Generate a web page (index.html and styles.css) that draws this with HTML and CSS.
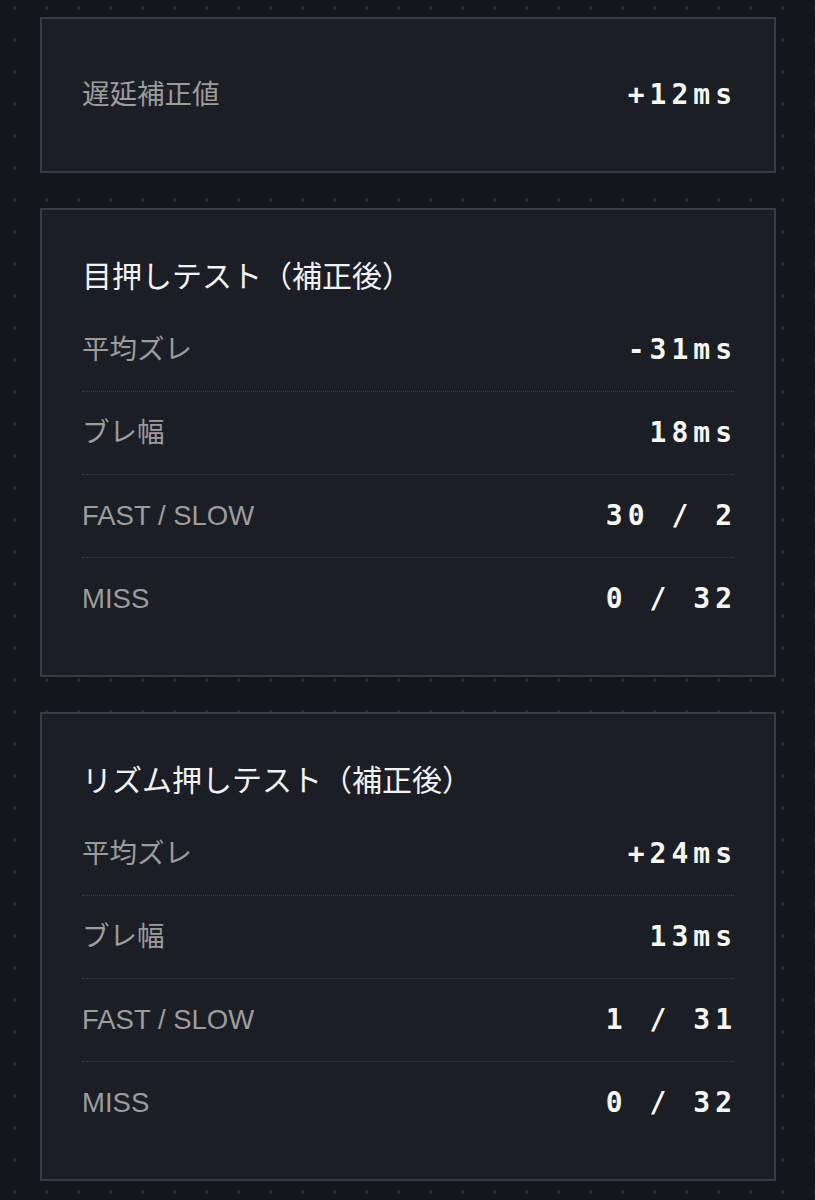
FILE: index.html
```html
<!DOCTYPE html>
<html lang="ja">
<head>
    <meta charset="UTF-8">
    <meta name="viewport" content="width=device-width, initial-scale=1.0">
    <title>遅延補正 結果</title>
    <link rel="stylesheet" href="styles.css">
</head>
<body>
    <div class="container">
        <section class="card">
            <div class="row">
                <span class="label">遅延補正値</span>
                <span class="value">+12ms</span>
            </div>
        </section>

        <section class="card">
            <h2 class="card-title">目押しテスト（補正後）</h2>
            <div class="row">
                <span class="label">平均ズレ</span>
                <span class="value">-31ms</span>
            </div>
            <div class="row">
                <span class="label">ブレ幅</span>
                <span class="value">18ms</span>
            </div>
            <div class="row">
                <span class="label">FAST / SLOW</span>
                <span class="value">30 / 2</span>
            </div>
            <div class="row">
                <span class="label">MISS</span>
                <span class="value">0 / 32</span>
            </div>
        </section>

        <section class="card">
            <h2 class="card-title">リズム押しテスト（補正後）</h2>
            <div class="row">
                <span class="label">平均ズレ</span>
                <span class="value">+24ms</span>
            </div>
            <div class="row">
                <span class="label">ブレ幅</span>
                <span class="value">13ms</span>
            </div>
            <div class="row">
                <span class="label">FAST / SLOW</span>
                <span class="value">1 / 31</span>
            </div>
            <div class="row">
                <span class="label">MISS</span>
                <span class="value">0 / 32</span>
            </div>
        </section>
    </div>
</body>
</html>
```

FILE: styles.css
```css
body {
    margin: 0;
    font-family: "Noto Sans CJK JP", "Noto Sans", sans-serif;
    background-color: #15161b;
    background-image: radial-gradient(circle, #2b2d34 1.2px, transparent 2.2px);
    background-size: 32px 32px;
    background-position: -1px -8px;
    color: #eee;
}
.container {
    margin: 0 39px 0 40px;
    padding: 17px 0 20px;
    display: flex;
    flex-direction: column;
    gap: 35px;
}
.card {
    background-color: #1c1e25;
    border: 2px solid #3a3d48;
    padding: 35px 40px 35px 40px;
}
.card-title {
    margin: 0 0 15px;
    padding-top: 9px;
    font-size: 30px;
    font-weight: normal;
    line-height: 40px;
    color: #f2f2f2;
}
.row {
    display: flex;
    justify-content: space-between;
    align-items: center;
    padding: 26px 0;
    line-height: 30px;
    border-bottom: 1px dotted #3d4049;
}
.row:last-child {
    border-bottom: none;
}
.label {
    font-family: "Liberation Sans", "Noto Sans CJK JP", sans-serif;
    font-size: 27.5px;
    color: #9c9c9c;
}
.value {
    font-family: "DejaVu Sans Mono", "Liberation Mono", monospace;
    font-weight: bold;
    font-size: 28px;
    letter-spacing: 5px;
    margin-right: -3px;
    color: #f7f7f2;
    white-space: pre;
}
```
